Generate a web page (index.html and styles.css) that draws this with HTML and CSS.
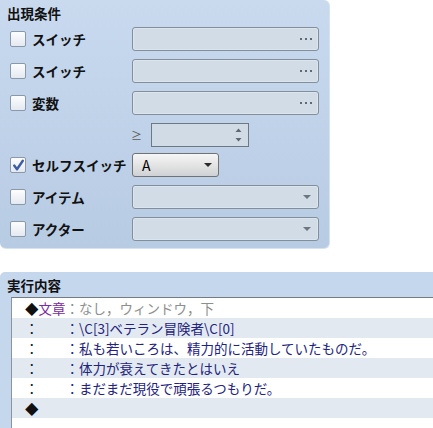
FILE: index.html
```html
<!DOCTYPE html>
<html lang="ja">
<head>
<meta charset="utf-8">
<link rel="stylesheet" href="styles.css">
</head>
<body>
<div class="panel">
  <div class="title">出現条件</div>
  <div class="rows">
    <div class="row">
      <div class="check"><span class="box"></span><span class="lbl">スイッチ</span></div>
      <div class="field"><svg class="dots" width="12" height="2" viewBox="0 0 12 2"><rect x="0" y="0" width="2" height="2"/><rect x="5" y="0" width="2" height="2"/><rect x="10" y="0" width="2" height="2"/></svg></div>
    </div>
    <div class="row">
      <div class="check"><span class="box"></span><span class="lbl">スイッチ</span></div>
      <div class="field"><svg class="dots" width="12" height="2" viewBox="0 0 12 2"><rect x="0" y="0" width="2" height="2"/><rect x="5" y="0" width="2" height="2"/><rect x="10" y="0" width="2" height="2"/></svg></div>
    </div>
    <div class="row">
      <div class="check"><span class="box"></span><span class="lbl">変数</span></div>
      <div class="field"><svg class="dots" width="12" height="2" viewBox="0 0 12 2"><rect x="0" y="0" width="2" height="2"/><rect x="5" y="0" width="2" height="2"/><rect x="10" y="0" width="2" height="2"/></svg></div>
    </div>
    <div class="row">
      <div class="spacer"></div>
      <span class="ge">≥</span>
      <div class="spin">
        <svg class="spin-arrows" width="7" height="14" viewBox="0 0 7 14"><path d="M0.5 4 L3.5 0.5 L6.5 4 Z"/><path d="M0.5 10 L3.5 13.5 L6.5 10 Z"/></svg>
      </div>
    </div>
    <div class="row tight">
      <div class="check"><span class="box checked"><svg width="13" height="13" viewBox="0 0 13 13"><path d="M2.2 6.6 L5 10.2 L10.8 1.8" fill="none" stroke="#3c5ca3" stroke-width="2.4" stroke-linecap="round" stroke-linejoin="round"/></svg></span><span class="lbl">セルフスイッチ</span></div>
      <div class="select"><span class="sel-text">A</span><svg class="arrow dark" width="8" height="4" viewBox="0 0 8 4"><path d="M0 0 H8 L4 4 Z"/></svg></div>
    </div>
    <div class="row">
      <div class="check"><span class="box"></span><span class="lbl">アイテム</span></div>
      <div class="field combo"><svg class="arrow" width="8" height="4" viewBox="0 0 8 4"><path d="M0 0 H8 L4 4 Z"/></svg></div>
    </div>
    <div class="row">
      <div class="check"><span class="box"></span><span class="lbl">アクター</span></div>
      <div class="field combo"><svg class="arrow" width="8" height="4" viewBox="0 0 8 4"><path d="M0 0 H8 L4 4 Z"/></svg></div>
    </div>
  </div>
</div>

<div class="section">
  <div class="sec-title">実行内容</div>
  <div class="list">
    <div class="line"><span class="blk">◆</span><span class="cmd">文章</span><span class="gray">：なし，ウィンドウ，下</span></div>
    <div class="line alt"><span class="blk">：</span><span class="blue">　　：\C[3]ベテラン冒険者\C[0]</span></div>
    <div class="line"><span class="blk">：</span><span class="blue">　　：私も若いころは、精力的に活動していたものだ。</span></div>
    <div class="line alt"><span class="blk">：</span><span class="blue">　　：体力が衰えてきたとはいえ</span></div>
    <div class="line"><span class="blk">：</span><span class="blue">　　：まだまだ現役で頑張るつもりだ。</span></div>
    <div class="line alt"><span class="blk">◆</span></div>
    <div class="line"></div>
  </div>
</div>
</body>
</html>
```

FILE: styles.css
```css
html, body {
  margin: 0;
  padding: 0;
  background: #ffffff;
}
body {
  width: 433px;
  height: 428px;
  overflow: hidden;
  font-family: "Noto Sans CJK JP", "Noto Sans", sans-serif;
  font-size: 13.5px;
  color: #111;
}
.panel {
  box-sizing: border-box;
  width: 330px;
  height: 249px;
  padding: 4px 0 0 10px;
  background: linear-gradient(#c9daef, #b7cbe3);
  border: 1px solid #d6e2ef;
  border-left: none;
  border-top: none;
  border-radius: 0 6px 6px 6px;
}
.title {
  height: 18px;
  line-height: 18px;
  font-weight: bold;
  font-size: 13.5px;
  margin-left: -3px;
}
.rows {
  margin-top: 5px;
  display: flex;
  flex-direction: column;
  gap: 8px;
}
.row {
  display: flex;
  align-items: center;
  height: 24px;
}
.row.tight {
  margin-top: -2px;
}
.check {
  width: 122px;
  display: flex;
  align-items: center;
}
.box {
  box-sizing: border-box;
  width: 16px;
  height: 16px;
  border: 1px solid #8a98a9;
  border-radius: 2px;
  background: linear-gradient(#fdfdfe, #e4e9f0);
  display: flex;
  align-items: center;
  justify-content: center;
}
.lbl {
  margin-left: 6px;
  font-weight: bold;
  font-size: 13.5px;
  line-height: 16px;
}
.field {
  box-sizing: border-box;
  width: 187px;
  height: 24px;
  border: 1px solid #838e9a;
  border-radius: 3px;
  background: #d2dce7;
  box-shadow: inset 0 0 0 1px #dce4ed;
  display: flex;
  align-items: center;
  justify-content: flex-end;
  padding-right: 6px;
}
.dots {
  fill: #5f6975;
}
.combo {
  padding-right: 7px;
}
.arrow {
  fill: #6c7580;
}
.arrow.dark {
  fill: #2b2b2b;
}
.spacer {
  width: 121px;
}
.ge {
  width: 20px;
  color: #5a5a5a;
  font-size: 11px;
  line-height: 16px;
}
.spin {
  box-sizing: border-box;
  width: 98px;
  height: 24px;
  border: 1px solid #6c7884;
  background: #d1dbe6;
  display: flex;
  align-items: center;
  justify-content: flex-end;
  padding-right: 6px;
}
.spin-arrows {
  fill: #5e6873;
}
.select {
  box-sizing: border-box;
  width: 87px;
  height: 24px;
  border: 1px solid #727272;
  border-radius: 3px;
  background: linear-gradient(#f6f6f6, #e4e4e4 50%, #cfd1d4);
  display: flex;
  align-items: center;
  justify-content: space-between;
  padding: 0 6px 0 9px;
}
.sel-text {
  font-size: 14px;
  color: #000;
}
.section {
  margin-top: 23px;
  width: 433px;
  height: 156px;
  background: #c5d7ed;
  border-radius: 5px 0 0 0;
}
.sec-title {
  height: 25px;
  line-height: 26px;
  padding-left: 7px;
  font-weight: bold;
  font-size: 13.5px;
  box-sizing: border-box;
}
.list {
  margin-left: 11px;
  height: 131px;
  background: #ffffff;
  border-top: 1px solid #767b82;
  border-left: 1px solid #8d939a;
}
.line {
  height: 20px;
  line-height: 20px;
  padding-left: 13px;
  white-space: pre;
  font-size: 13.5px;
}
.line.alt {
  background: #e2e9f1;
}
.blk {
  color: #111;
}
.cmd {
  color: #7c2a9c;
}
.gray {
  color: #8e8e8e;
}
.blue {
  color: #23237e;
}
```
